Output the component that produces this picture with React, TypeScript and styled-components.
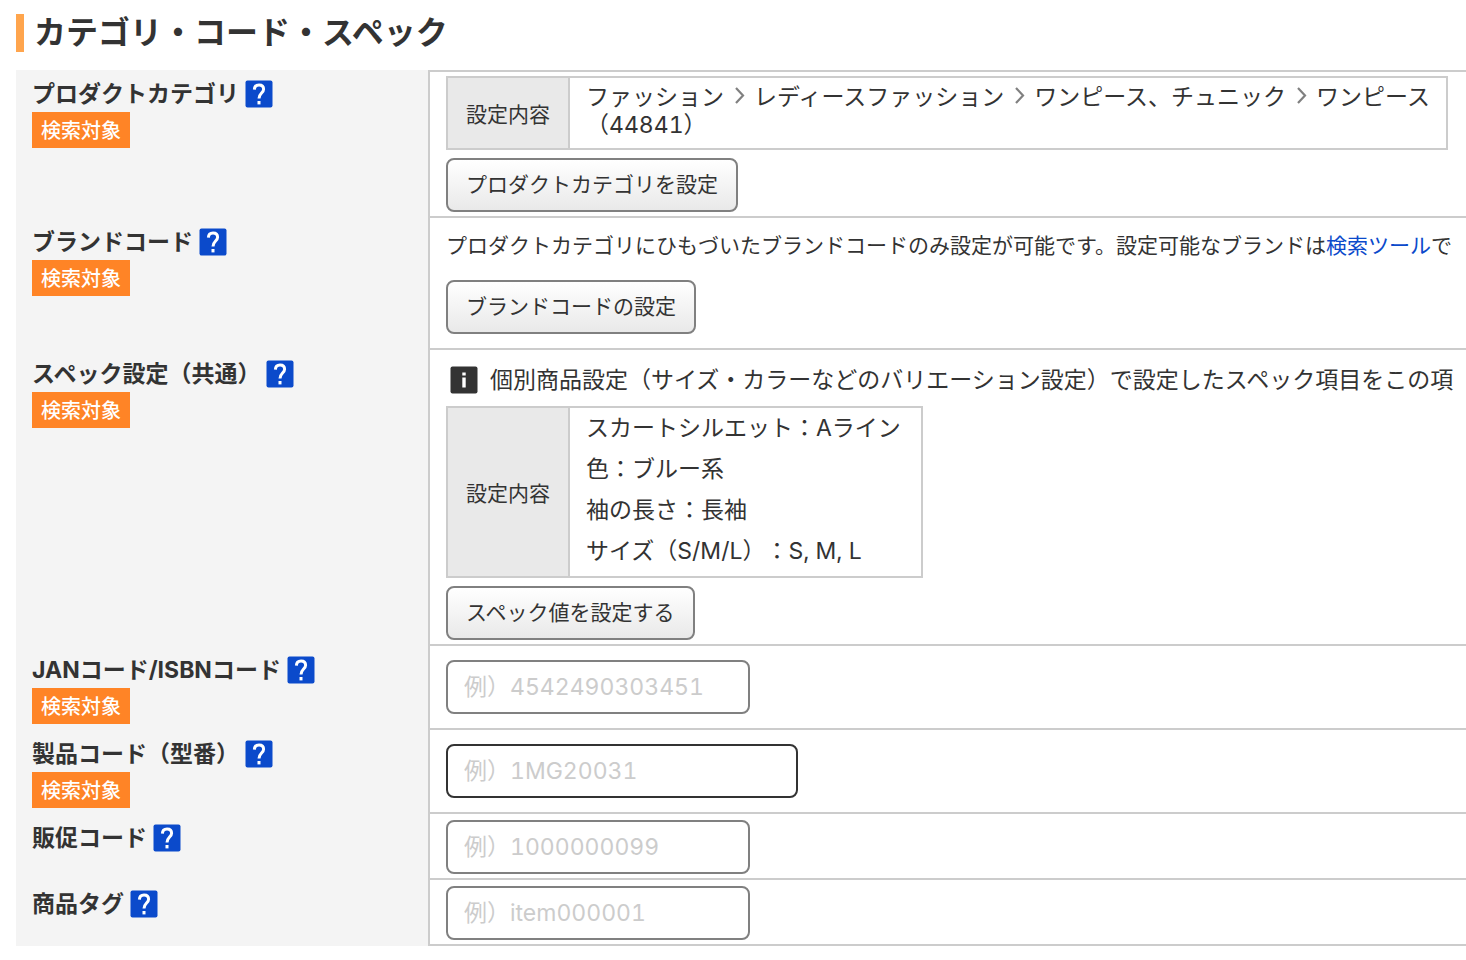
import React from "react";
import styled, { createGlobalStyle } from "styled-components";

const GlobalStyle = createGlobalStyle`
  * { box-sizing: border-box; }
  body {
    margin: 0;
    background: #fff;
    color: #333;
    font-family: Inter, "Noto Sans CJK JP", sans-serif;
    font-size: 23px;
    font-variant-numeric: tabular-nums;
    text-spacing-trim: space-all;
    overflow-x: hidden;
  }
`;

const Page = styled.main`
  padding: 14px 0 14px 16px;
`;

const Heading = styled.h1`
  margin: 0 0 18px;
  padding-left: 10px;
  border-left: 8px solid #ffa54d;
  font-size: 32px;
  line-height: 38px;
  font-weight: 700;
`;

const FormTable = styled.table`
  width: 100%;
  table-layout: fixed;
  border-spacing: 0;
`;

const LabelCell = styled.th<{ $first?: boolean }>`
  width: 412px;
  padding: ${(p) => (p.$first ? 10 : 12)}px 16px 4px;
  background: #f4f4f4;
  text-align: left;
  vertical-align: top;
`;

const LabelLine = styled.div`
  display: flex;
  align-items: center;
  gap: 6px;
  line-height: 28px;
  font-weight: 700;
`;

const Tag = styled.span`
  display: inline-block;
  margin-top: 4px;
  padding: 2px 9px 0;
  background: #ff8426;
  color: #fff;
  font-size: 20px;
  line-height: 34px;
  font-weight: 500;
  vertical-align: top;
`;

const ValueCell = styled.td<{ $top: number; $bottom: number }>`
  padding: ${(p) => p.$top}px 18px ${(p) => p.$bottom}px 16px;
  border-left: 2px solid #ccc;
  border-top: 2px solid #ccc;
  vertical-align: top;

  tr:last-child > & {
    border-bottom: 2px solid #ccc;
  }
`;

const HelpLink = styled.a`
  display: flex;
`;

const Settings = styled.dl<{ $fit?: boolean }>`
  display: flex;
  width: ${(p) => (p.$fit ? "fit-content" : "100%")};
  margin: 0 0 8px;
  border: 2px solid #ccc;
`;

const SettingsName = styled.dt`
  display: flex;
  flex: none;
  align-items: center;
  justify-content: center;
  width: 122px;
  border-right: 2px solid #ccc;
  background: #e9e9e9;
  font-size: 21px;
`;

const SettingsBody = styled.dd`
  margin: 0;
  padding: 5px 16px 9px;
  line-height: 28px;
`;

const CrumbPath = styled.div`
  display: flex;
  white-space: nowrap;
`;

const SpecBody = styled.dd`
  margin: 0;
  padding: 0 20px 4px 16px;
  line-height: 41px;
`;

const CrumbArrow = styled.svg`
  flex: none;
  margin: 4px 9px 0 11px;
`;

const Note = styled.p`
  margin: 0 0 20px;
  font-size: 21px;
  line-height: 28px;
  white-space: nowrap;

  a {
    color: #0b4acb;
    text-decoration: none;
  }
`;

const InfoNote = styled.p`
  display: flex;
  align-items: center;
  gap: 12px;
  margin: 0 0 10px 4px;
  line-height: 32px;
  white-space: nowrap;

  svg {
    flex: none;
  }
`;

const ActionButton = styled.button`
  display: block;
  height: 54px;
  padding: 0 18px 4px;
  border: 2px solid #808080;
  border-radius: 8px;
  background: linear-gradient(#fff, #e9e9e9);
  color: #333;
  font-family: inherit;
  font-size: 21px;
`;

const TextInput = styled.input<{ $wide?: boolean }>`
  display: block;
  width: ${(p) => (p.$wide ? 352 : 304)}px;
  height: 54px;
  padding: 0 16px;
  border: 2px solid ${(p) => (p.$wide ? "#333" : "#808080")};
  border-radius: 8px;
  background: #fff;
  color: #333;
  font: inherit;
  font-variant-numeric: tabular-nums;

  &::placeholder {
    color: #ccc;
    opacity: 1;
  }
`;

const Help = ({ about }: { about: string }) => (
  <HelpLink href="#help" aria-label={`${about}のヘルプ`}>
    <svg width="28" height="28" viewBox="0 0 28 28">
      <rect x="0.5" y="0.5" width="27" height="27" rx="2" fill="#0b4acb" />
      <path
        d="M9.4 9.6C9.5 6.6 11.2 5 14 5C16.9 5 18.6 6.7 18.6 9.2C18.6 12.9 14 13.4 14 18.4"
        fill="none"
        stroke="#fff"
        strokeWidth="3"
      />
      <rect x="12.5" y="21" width="3" height="3.4" fill="#fff" />
    </svg>
  </HelpLink>
);

const Info = () => (
  <svg width="28" height="28" viewBox="0 0 28 28" aria-hidden="true">
    <rect x="0.5" y="0.5" width="27" height="27" rx="2" fill="#333" />
    <rect x="12.3" y="6.5" width="3.4" height="3" fill="#fff" />
    <rect x="12.3" y="11.5" width="3.4" height="10" fill="#fff" />
  </svg>
);

const Arrow = () => (
  <CrumbArrow width="10" height="17" viewBox="0 0 10 17" aria-hidden="true">
    <path d="M1 1L8 8.5L1 16" fill="none" stroke="#808080" strokeWidth="2.2" />
  </CrumbArrow>
);

type LabelProps = { text: string; first?: boolean; tag?: boolean; htmlFor?: string };

const RowLabel = ({ text, first, tag, htmlFor }: LabelProps) => (
  <LabelCell scope="row" $first={first}>
    <LabelLine>
      {htmlFor ? <label htmlFor={htmlFor}>{text}</label> : <span>{text}</span>}
      <Help about={text} />
    </LabelLine>
    {tag && <Tag>検索対象</Tag>}
  </LabelCell>
);

const fields = [
  { id: "jan", label: "JANコード/ISBNコード", hint: "例）4542490303451", tag: true },
  { id: "model", label: "製品コード（型番）", hint: "例）1MG20031", tag: true, wide: true },
  { id: "promo", label: "販促コード", hint: "例）1000000099" },
  { id: "item-tag", label: "商品タグ", hint: "例）item000001" },
];

const crumbs = ["ファッション", "レディースファッション", "ワンピース、チュニック", "ワンピース"];

const specs = ["スカートシルエット：Aライン", "色：ブルー系", "袖の長さ：長袖", "サイズ（S/M/L）：S, M, L"];

export default function App() {
  return (
    <>
      <GlobalStyle />
      <Page lang="ja">
        <Heading>カテゴリ・コード・スペック</Heading>
        <FormTable>
          <tbody>
            <tr>
              <RowLabel text="プロダクトカテゴリ" first tag />
              <ValueCell $top={4} $bottom={4}>
                <Settings>
                  <SettingsName>設定内容</SettingsName>
                  <SettingsBody>
                    <CrumbPath>
                      {crumbs.map((c, i) => (
                        <React.Fragment key={c}>
                          {i > 0 && <Arrow />}
                          <span>{c}</span>
                        </React.Fragment>
                      ))}
                    </CrumbPath>
                    <div>（44841）</div>
                  </SettingsBody>
                </Settings>
                <ActionButton type="button">プロダクトカテゴリを設定</ActionButton>
              </ValueCell>
            </tr>
            <tr>
              <RowLabel text="ブランドコード" tag />
              <ValueCell $top={14} $bottom={14}>
                <Note>
                  プロダクトカテゴリにひもづいたブランドコードのみ設定が可能です。設定可能なブランドは
                  <a href="#search-tool">検索ツール</a>で
                </Note>
                <ActionButton type="button">ブランドコードの設定</ActionButton>
              </ValueCell>
            </tr>
            <tr>
              <RowLabel text="スペック設定（共通）" tag />
              <ValueCell $top={14} $bottom={4}>
                <InfoNote>
                  <Info />
                  個別商品設定（サイズ・カラーなどのバリエーション設定）で設定したスペック項目をこの項
                </InfoNote>
                <Settings $fit>
                  <SettingsName>設定内容</SettingsName>
                  <SpecBody>
                    {specs.map((s) => (
                      <div key={s}>{s}</div>
                    ))}
                  </SpecBody>
                </Settings>
                <ActionButton type="button">スペック値を設定する</ActionButton>
              </ValueCell>
            </tr>
            {fields.map((f) => (
              <tr key={f.id}>
                <RowLabel text={f.label} tag={f.tag} htmlFor={f.id} />
                <ValueCell $top={f.tag ? 14 : 6} $bottom={f.tag ? 14 : 4}>
                  <TextInput id={f.id} type="text" placeholder={f.hint} $wide={f.wide} />
                </ValueCell>
              </tr>
            ))}
          </tbody>
        </FormTable>
      </Page>
    </>
  );
}
